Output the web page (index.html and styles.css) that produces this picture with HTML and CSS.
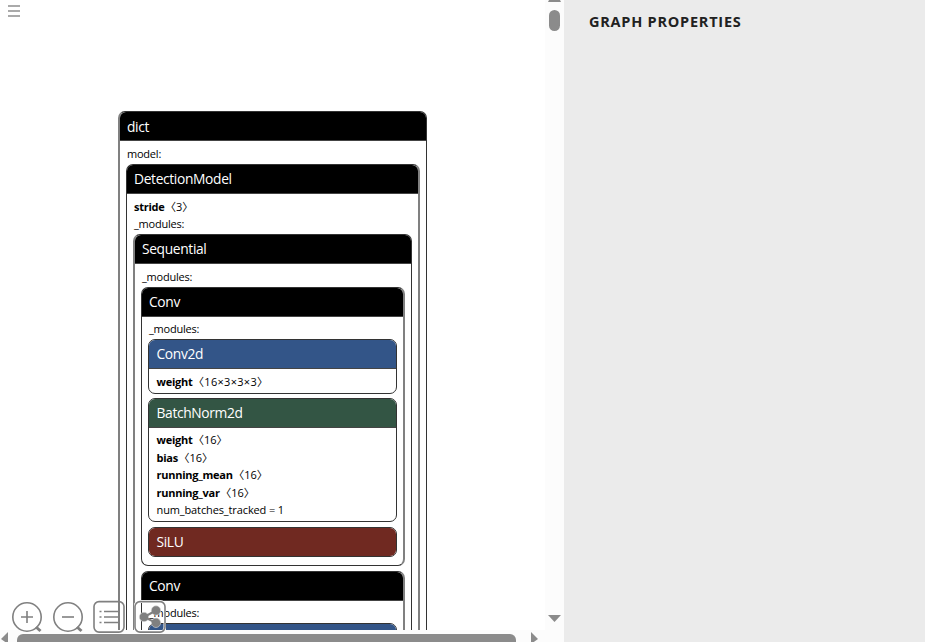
FILE: index.html
```html
<!DOCTYPE html>
<html lang="en">
<head>
<meta charset="utf-8">
<title>Graph</title>
<link rel="stylesheet" href="styles.css">
</head>
<body>
<div class="app">
  <main class="viewer">
    <div class="canvas">
      <section class="node dict">
        <h2 class="root">dict</h2>
        <div class="row label">model:</div>
        <section class="node detection">
          <h2>DetectionModel</h2>
          <div class="row"><b>stride</b><span class="shape">〈3〉</span></div>
          <div class="row label tight">_modules:</div>
          <section class="node sequential">
            <h2>Sequential</h2>
            <div class="row label">_modules:</div>
            <section class="node conv">
              <h2>Conv</h2>
              <div class="row label tight">_modules:</div>
              <section class="node leaf blue first">
                <h2>Conv2d</h2>
                <div class="row"><b>weight</b><span class="shape wide">〈16×3×3×3〉</span></div>
              </section>
              <section class="node leaf green">
                <h2>BatchNorm2d</h2>
                <div class="row"><b>weight</b><span class="shape">〈16〉</span></div>
                <div class="row"><b>bias</b><span class="shape">〈16〉</span></div>
                <div class="row"><b>running_mean</b><span class="shape">〈16〉</span></div>
                <div class="row"><b>running_var</b><span class="shape">〈16〉</span></div>
                <div class="row plain">num_batches_tracked = 1</div>
              </section>
              <section class="node leaf red"><h2>SiLU</h2></section>
            </section>
            <section class="node conv next">
              <h2>Conv</h2>
              <div class="row label tight">_modules:</div>
              <section class="node leaf blue first"><h2></h2></section>
            </section>
          </section>
        </section>
      </section>
    </div>
    <div class="vscroll">
      <svg width="18" height="642" viewBox="0 0 18 642"><path d="M3 2h13l-1-2H4z"/><rect x="4" y="10" width="11" height="21" rx="5.5"/><path d="M3 615h13l-6.500 7z"/></svg>
    </div>
    <div class="hscroll">
      <svg width="546" height="12" viewBox="0 0 546 12"><path d="M8 2v12L1 9z"/><rect x="17" y="4" width="499" height="14" rx="6"/><path d="M531 2v12l7-5z"/></svg>
    </div>
    <svg class="menu" width="14" height="14" viewBox="0 0 14 14"><path d="M1 1h12M1 6h12M1 11h12"/></svg>
    <div class="toolbar">
      <svg width="32" height="34" viewBox="0 0 32 34"><circle cx="16" cy="17" r="14.2"/><path d="M10 17h12M16 11v12"/><path class="handle" d="M25 27l4.500 4"/></svg>
      <svg width="32" height="34" viewBox="0 0 32 34"><circle cx="16" cy="17" r="14.2"/><path d="M10 17h12"/><path class="handle" d="M25 27l4.500 4"/></svg>
      <svg width="32" height="34" viewBox="0 0 32 34"><rect x="1" y="1.600" width="30" height="30.500" rx="5"/><path d="M11 11.500h16M11 17h16M11 22.500h16"/><path class="dots" d="M6.500 11.500h2M6.500 17h2M6.500 22.500h2"/></svg>
      <svg width="32" height="34" viewBox="0 0 32 34"><rect class="halo" x="1" y="1.600" width="30" height="30.500" rx="5"/><rect x="1" y="1.600" width="30" height="30.500" rx="5"/><g class="solid"><circle cx="22" cy="10.500" r="4.700"/><circle cx="10" cy="17" r="4.700"/><circle cx="22" cy="22.800" r="4.700"/></g><path class="link" d="M22 10.500L10 17l12 5.800"/></svg>
    </div>
  </main>
  <aside class="sidebar"><h1>GRAPH PROPERTIES</h1></aside>
</div>
</body>
</html>
```
FILE: styles.css
```css
* { box-sizing: border-box; }
body {
  margin: 0;
  width: 925px;
  height: 642px;
  overflow: hidden;
  background: #fff;
  color: #000;
  font-family: "Open Sans", "Noto Sans", "Noto Sans CJK SC", sans-serif;
}
.app { display: flex; height: 642px; }
.viewer {
  position: relative;
  display: grid;
  grid-template: 630px 12px / 545px 19px;
  width: 564px;
}
.canvas { overflow: hidden; padding: 111px 0 0 118px; }
.vscroll { grid-column: 2; grid-row: 1 / 3; background: #fcfcfc; }
.hscroll { grid-column: 1; grid-row: 2; background: #fcfcfc; }
.vscroll svg, .hscroll svg { display: block; fill: #8b8b8b; }
.sidebar { flex: 1; background: #ebebeb; padding: 12px 0 0 25px; }
h1 {
  margin: 0;
  font-size: 14.5px;
  line-height: 20px;
  letter-spacing: 0.76px;
  font-weight: 700;
  color: #212121;
}

.node {
  border: 1px solid #333;
  border-radius: 7px;
  background: #fff;
}
h2 {
  margin: 0;
  height: 29px;
  padding-left: 7px;
  border-bottom: 1px solid #444;
  border-radius: 6px 6px 0 0;
  background: #000;
  color: #fff;
  font-size: 13.8px;
  line-height: 27px;
  letter-spacing: -0.35px;
  font-weight: 400;
}
h2.root { line-height: 29px; }
.row {
  height: 17.5px;
  padding-left: 7px;
  font-size: 11px;
  line-height: 16px;
  white-space: pre;
}
.row b { letter-spacing: -0.25px; }
.label { letter-spacing: -0.22px; }
.label.tight { line-height: 14.5px; }
.plain { letter-spacing: -0.12px; }
.shape { margin-left: 0.5px; }
.shape.wide { letter-spacing: 0.3px; }
h2 + .row { margin-top: 5px; }
.dict { width: 309px; height: 700px; border-left: 2px solid #808080; }
.detection { width: 294px; height: 650px; margin: 0.5px 0 0 6px; border-right: 2px solid #808080; }
.sequential { width: 279px; height: 600px; margin-left: 6px; border-left: 2px solid #808080; }
.conv { width: 264px; height: 279px; margin: 0.5px 0 0 6px; border-right: 2px solid #808080; }
.conv.next { margin-top: 5px; }
.leaf { width: 249px; margin: 5px 0 0 6px; }
.leaf h2, .leaf .row { padding-left: 7.5px; }
.leaf.first { margin-top: -0.5px; height: 55px; }
.leaf.green { height: 124px; margin-top: 4px; }
.leaf.red { height: 30px; }
.blue h2 { background: #335588; }
.green h2 { background: #335544; }
.green h2 + .row { margin-top: 4px; }
.red h2 { height: 28px; background: #702921; border-bottom: 0; border-radius: 6px; }

.menu { position: absolute; left: 7px; top: 5px; fill: none; stroke: #aaa; stroke-width: 2; }
.toolbar { position: absolute; left: 11px; top: 600px; display: flex; gap: 9px; }
.toolbar svg { display: block; fill: none; stroke: #808080; stroke-width: 1.6; }
.toolbar .handle { stroke-width: 3; }
.toolbar .halo { stroke: #fff; stroke-width: 3; }
.toolbar .link { stroke-width: 2; }
.toolbar .solid { fill: #808080; stroke: #ddd; stroke-width: 0.6; }
```
